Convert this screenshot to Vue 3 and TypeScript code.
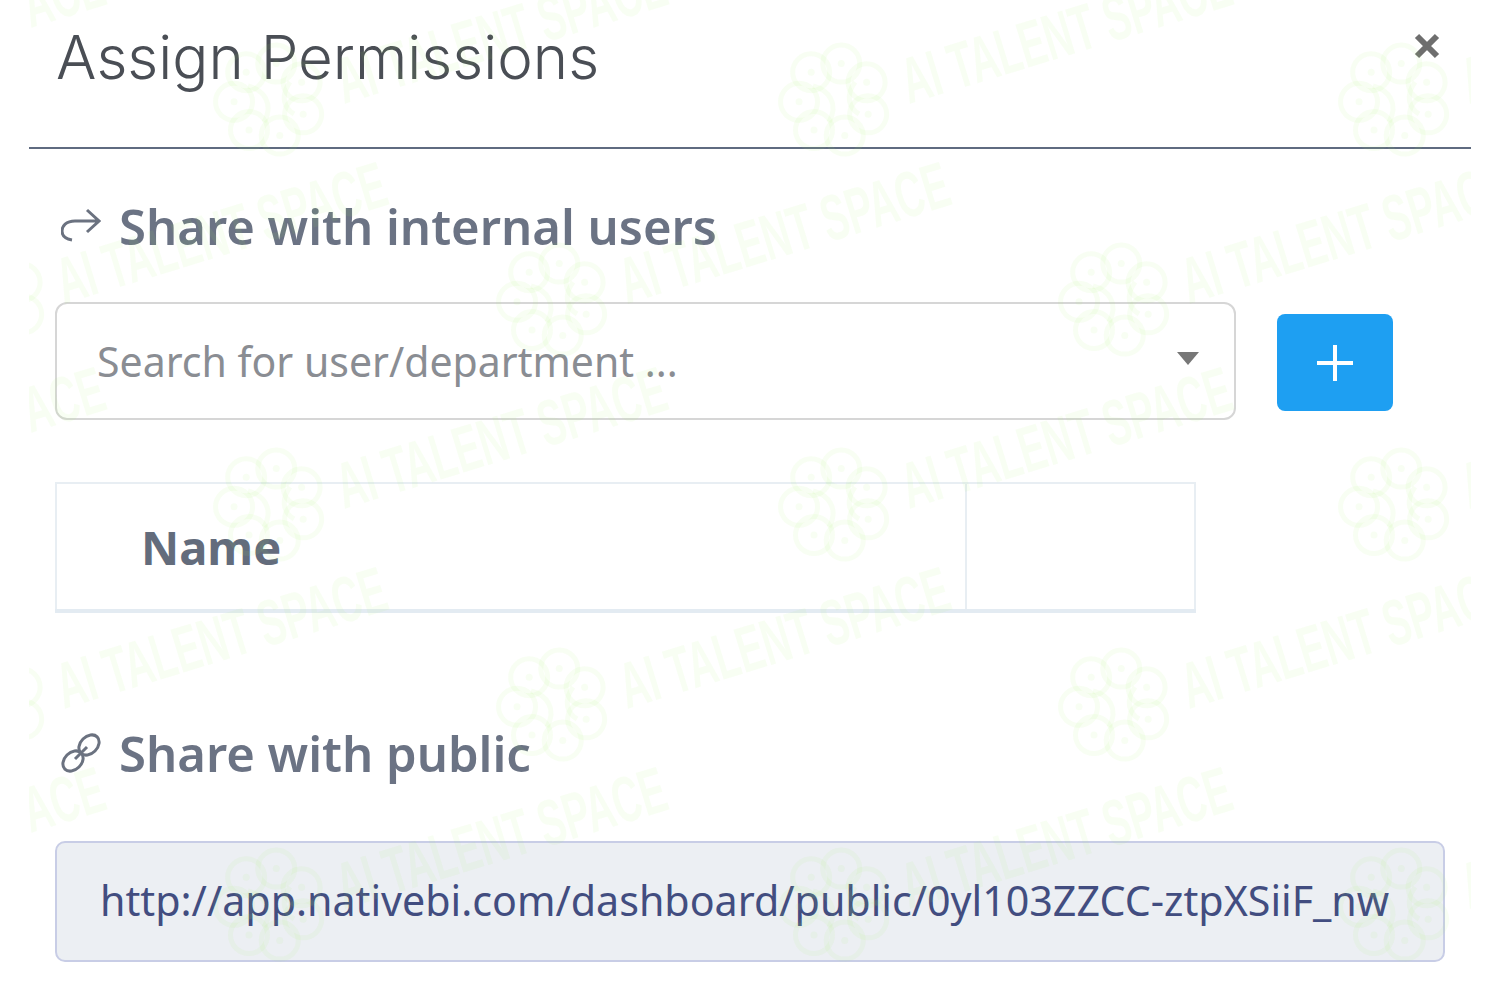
<script setup lang="ts">
const rows: { y: number; xs: number[] }[] = [
  { y: 100, xs: [-292, 270, 835, 1395] },
  { y: 300, xs: [-10, 553, 1115] },
  { y: 505, xs: [-292, 270, 835, 1395] },
  { y: 705, xs: [-10, 553, 1115] },
  { y: 905, xs: [-292, 270, 835, 1395] },
]
const marks = rows.flatMap((r) => r.xs.map((x) => ({ x, y: r.y })))
const lobes = [0, 1, 2, 3, 4, 5, 6].map((n) => {
  const a = ((n * 360) / 7 - 80) * (Math.PI / 180)
  return { cx: Math.cos(a) * 36, cy: Math.sin(a) * 37 }
})
</script>

<template>
  <div class="modal">
    <svg class="watermark" width="1442" height="1000" viewBox="29 0 1442 1000" aria-hidden="true">
      <g v-for="m in marks" :key="m.x + '-' + m.y" :transform="`translate(${m.x} ${m.y})`">
        <circle v-for="(l, i) in lobes" :key="i" :cx="l.cx" :cy="l.cy" r="18.5" class="lobe" />
        <circle v-for="(l, i) in lobes" :key="'d' + i" :cx="l.cx" :cy="l.cy" r="3.5" class="dot" />
        <path class="lobe" d="M-22 -14 C-6 -10 4 4 -6 22 M20 -18 C10 -4 14 8 24 14" />
        <text transform="translate(74 4) rotate(-17) scale(0.81 1.35)" class="mark-text">AI TALENT SPACE</text>
      </g>
    </svg>

    <header class="head">
      <h1 class="title">Assign Permissions</h1>
      <svg class="close" width="26" height="26" viewBox="0 0 26 26" aria-hidden="true">
        <path d="M3 3 L23 23 M23 3 L3 23" />
      </svg>
    </header>

    <section class="body">
      <h2 class="section internal">
        <svg class="sec-icon" width="40" height="36" viewBox="0 0 40 36" aria-hidden="true">
          <path d="M26 2 L38 13 L26 24 M38 13 H14 C5 13 1 18 1 23 C1 28 5 31 11 32" />
        </svg>
        Share with internal users
      </h2>

      <div class="picker">
        <div class="select">
          <span class="placeholder">Search for user/department ...</span>
          <span class="caret"></span>
        </div>
        <button class="add" type="button">
          <svg width="38" height="38" viewBox="0 0 38 38" aria-hidden="true"><path d="M19 1 V37 M1 19 H37" /></svg>
        </button>
      </div>

      <table class="grid">
        <thead>
          <tr>
            <th class="name">Name</th>
            <th class="blank"></th>
          </tr>
        </thead>
      </table>

      <h2 class="section public">
        <svg class="sec-icon" width="40" height="40" viewBox="0 0 40 40" aria-hidden="true">
          <ellipse cx="12" cy="28" rx="11.5" ry="8.5" transform="rotate(-45 12 28)" />
          <ellipse cx="28" cy="12" rx="11.5" ry="8.5" transform="rotate(-45 28 12)" />
          <path d="M14 26 L26 14" />
        </svg>
        Share with public
      </h2>

      <div class="url">http://app.nativebi.com/dashboard/public/0yl103ZZCC-ztpXSiiF_nw</div>
    </section>
  </div>
</template>

<style>
html, body { margin: 0; background: #fff; }
</style>

<style scoped>
.modal {
  position: relative;
  width: 1442px;
  height: 1000px;
  margin-left: 29px;
  overflow: hidden;
  background: #fff;
  font-family: "Noto Sans", "Open Sans", sans-serif;
}
.watermark {
  position: absolute;
  inset: 0;
  pointer-events: none;
  z-index: 2;
}
.lobe { fill: none; stroke: #a6ee6a; stroke-opacity: 0.08; stroke-width: 5; }
.dot { fill: #a6ee6a; fill-opacity: 0.08; }
.mark-text {
  font-family: "Liberation Sans", sans-serif;
  font-weight: 700;
  font-size: 48px;
  fill: #a6ee6a;
  fill-opacity: 0.08;
}
.head {
  height: 147px;
  border-bottom: 2px solid #5f6b80;
  display: flex;
  justify-content: space-between;
  align-items: flex-start;
  padding: 0 31px 0 27px;
}
.title {
  margin: 18px 0 0;
  font-family: Inter, sans-serif;
  font-weight: 300;
  font-size: 60px;
  line-height: 78px;
  color: #4a4e55;
}
.close { margin-top: 33px; }
.close path { fill: none; stroke: #6e6e6e; stroke-width: 6; }
.body { padding-left: 26px; }
.section {
  display: flex;
  align-items: center;
  gap: 18px;
  margin: 0;
  font-weight: 600;
  font-size: 49px;
  line-height: 64px;
  color: #6b7384;
}
.internal { margin-top: 45px; padding-left: 6px; }
.public { margin-top: 108px; padding-left: 6px; }
.sec-icon { flex: none; }
.sec-icon path, .sec-icon circle, .sec-icon ellipse { fill: none; stroke: #6b7280; stroke-width: 3; }
.picker {
  display: flex;
  align-items: flex-start;
  gap: 41px;
  margin-top: 44px;
}
.select {
  box-sizing: border-box;
  width: 1181px;
  height: 118px;
  border: 2px solid #d6d6d6;
  border-radius: 12px;
  display: flex;
  align-items: center;
  justify-content: space-between;
  padding: 0 35px 0 40px;
}
.placeholder { font-size: 41px; color: #8a8d93; }
.caret {
  width: 0;
  height: 0;
  border-left: 11px solid transparent;
  border-right: 11px solid transparent;
  border-top: 13px solid #777;
  margin-bottom: 5px;
}
.add {
  box-sizing: border-box;
  width: 116px;
  height: 97px;
  margin-top: 12px;
  border: 0;
  border-radius: 8px;
  background: #1e9ff2;
  display: flex;
  align-items: center;
  justify-content: center;
  padding: 0;
}
.add path { fill: none; stroke: #fff; stroke-width: 4; }
.grid {
  width: 1141px;
  height: 131px;
  margin-top: 62px;
  border-collapse: collapse;
  table-layout: fixed;
}
.grid th {
  box-sizing: border-box;
  border: 2px solid #e8eef3;
  border-bottom: 4px solid #e3ebf2;
  padding: 0;
}
.name {
  width: 910px;
  text-align: left;
  padding-left: 84px !important;
  font-weight: 700;
  font-size: 47px;
  color: #636c7c;
}
.url {
  box-sizing: border-box;
  width: 1390px;
  height: 121px;
  margin-top: 56px;
  border: 2px solid #c8cde6;
  border-radius: 10px;
  background: #eceff3;
  display: flex;
  align-items: center;
  padding: 0 0 4px 43px;
  font-size: 41.2px;
  color: #424d80;
  white-space: nowrap;
}
</style>
